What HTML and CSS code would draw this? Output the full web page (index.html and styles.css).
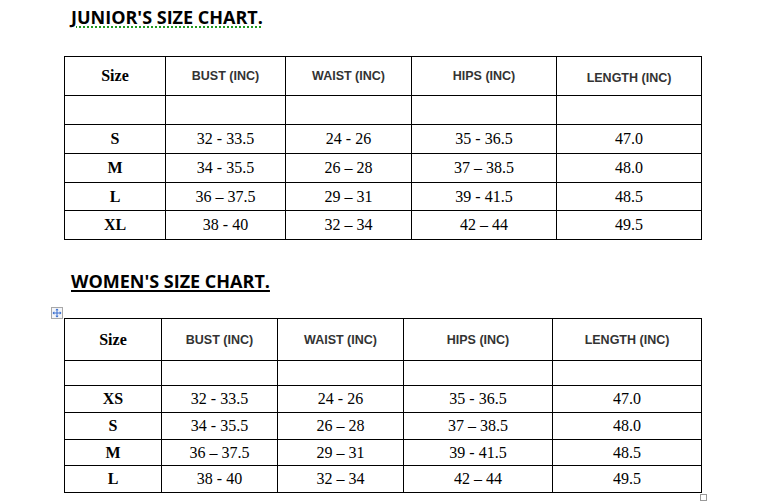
FILE: index.html
```html
<!DOCTYPE html>
<html>
<head>
<meta charset="utf-8">
<link rel="stylesheet" href="styles.css">
</head>
<body>
<h2 class="title title-junior">JUNIOR'S SIZE CHART.</h2>
<div class="chart chart-junior">
  <table class="size-table">
    <colgroup>
      <col style="width:100px"><col style="width:119px"><col style="width:125px"><col style="width:144px"><col style="width:144px">
    </colgroup>
    <tr class="head" style="height:38px"><th class="size-h">Size</th><th>BUST (INC)</th><th>WAIST (INC)</th><th>HIPS (INC)</th><th class="lower">LENGTH (INC)</th></tr>
    <tr style="height:28px"><td></td><td></td><td></td><td></td><td></td></tr>
    <tr style="height:28px"><td class="sz">S</td><td>32 - 33.5</td><td>24 - 26</td><td>35 - 36.5</td><td>47.0</td></tr>
    <tr style="height:28px"><td class="sz">M</td><td>34 - 35.5</td><td>26 – 28</td><td>37 – 38.5</td><td>48.0</td></tr>
    <tr style="height:27px"><td class="sz">L</td><td>36 – 37.5</td><td>29 – 31</td><td>39 - 41.5</td><td>48.5</td></tr>
    <tr style="height:28px"><td class="sz">XL</td><td>38 - 40</td><td>32 – 34</td><td>42 – 44</td><td>49.5</td></tr>
  </table>
</div>

<h2 class="title title-women">WOMEN'S SIZE CHART.</h2>
<div class="chart chart-women">
  <span class="move-handle">
    <svg width="12" height="12" viewBox="0 0 12 12">
      <rect x="0.5" y="0.5" width="11" height="11" fill="#f4f6fa" stroke="#a8a8a8"/>
      <g fill="none" stroke="#3a6fd0" stroke-width="1">
        <line x1="6" y1="2" x2="6" y2="10"/>
        <line x1="2" y1="6" x2="10" y2="6"/>
      </g>
      <g fill="#3a6fd0">
        <polygon points="6,1.5 4.3,3.3 7.7,3.3"/>
        <polygon points="6,10.5 4.3,8.7 7.7,8.7"/>
        <polygon points="1.5,6 3.3,4.3 3.3,7.7"/>
        <polygon points="10.5,6 8.7,4.3 8.7,7.7"/>
      </g>
    </svg>
  </span>
  <table class="size-table">
    <colgroup>
      <col style="width:96px"><col style="width:115px"><col style="width:125px"><col style="width:148px"><col style="width:148px">
    </colgroup>
    <tr class="head" style="height:41px"><th class="size-h">Size</th><th>BUST (INC)</th><th>WAIST (INC)</th><th>HIPS (INC)</th><th>LENGTH (INC)</th></tr>
    <tr style="height:24px"><td></td><td></td><td></td><td></td><td></td></tr>
    <tr style="height:26px"><td class="sz">XS</td><td>32 - 33.5</td><td>24 - 26</td><td>35 - 36.5</td><td>47.0</td></tr>
    <tr style="height:26px"><td class="sz">S</td><td>34 - 35.5</td><td>26 – 28</td><td>37 – 38.5</td><td>48.0</td></tr>
    <tr style="height:25px"><td class="sz">M</td><td>36 – 37.5</td><td>29 – 31</td><td>39 - 41.5</td><td>48.5</td></tr>
    <tr style="height:26px"><td class="sz">L</td><td>38 - 40</td><td>32 – 34</td><td>42 – 44</td><td>49.5</td></tr>
  </table>
  <span class="resize-handle"></span>
</div>
</body>
</html>
```
FILE: styles.css
```css
html, body {
  margin: 0;
  padding: 0;
  background: #ffffff;
}

body {
  width: 775px;
  height: 503px;
  overflow: hidden;
  font-family: "Liberation Serif", "Times New Roman", serif;
  color: #000;
}

.title {
  margin: 0;
  padding-left: 71px;
  font-family: "Open Sans", "Liberation Sans", sans-serif;
  font-weight: 700;
  font-size: 18px;
  line-height: 20px;
  color: #000;
  text-decoration: underline;
  text-underline-offset: 2px;
  text-decoration-thickness: 1.5px;
}

.title-junior {
  padding-top: 7px;
  text-decoration-color: #1f9a1f;
  text-decoration-style: dotted;
  text-decoration-thickness: 2px;
}

.title-women {
  padding-top: 31px;
}

.chart {
  position: relative;
  margin-left: 64px;
  width: 638px;
}

.chart-junior {
  margin-top: 29px;
}

.chart-women {
  margin-top: 27px;
}

.size-table {
  table-layout: fixed;
  width: 638px;
  border-collapse: separate;
  border-spacing: 1px;
  background: #000;
}

.size-table th,
.size-table td {
  background: #fff;
  padding: 0;
  text-align: center;
  vertical-align: middle;
}

.size-table td {
  font-size: 16px;
  line-height: 18px;
}

.size-table td.sz {
  font-weight: 700;
}

.size-table th {
  font-family: "Liberation Sans", Arial, sans-serif;
  font-weight: 700;
  font-size: 12.5px;
  line-height: 14px;
  color: #333;
}

.size-table th.size-h {
  font-family: "Liberation Serif", "Times New Roman", serif;
  font-size: 16px;
  color: #000;
}

.chart-junior th {
  padding-bottom: 1px;
}

.chart-junior th.lower {
  padding-top: 4px;
  padding-bottom: 0;
}

.move-handle {
  position: absolute;
  left: -13px;
  top: -11px;
  width: 12px;
  height: 12px;
  line-height: 0;
}

.resize-handle {
  position: absolute;
  right: -5px;
  bottom: -8px;
  width: 5px;
  height: 5px;
  border: 1px solid #999;
  background: #fff;
}
```
